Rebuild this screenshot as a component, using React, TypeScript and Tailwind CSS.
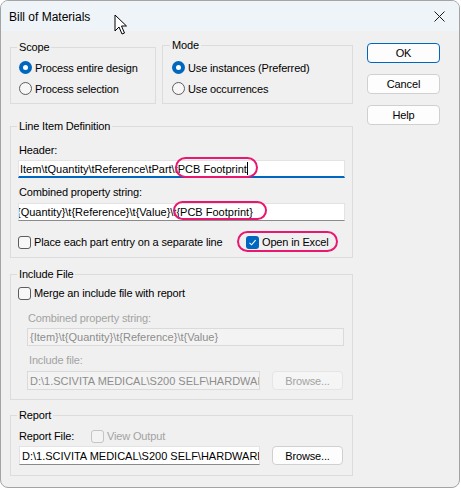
import React from "react";

const Radio = ({ checked, label }: { checked?: boolean; label: string }) => (
  <div className="flex h-[21px] items-center">
    {checked ? (
      <span className="flex h-[13px] w-[13px] items-center justify-center rounded-full bg-[#0067c0]">
        <span className="h-[5px] w-[5px] rounded-full bg-white" />
      </span>
    ) : (
      <span className="h-[13px] w-[13px] rounded-full border border-[#5d5d5d] bg-[#f7f7f7]" />
    )}
    <span className="ml-[3px] leading-[14px]">{label}</span>
  </div>
);

const Check = ({
  checked,
  disabled,
  label,
}: {
  checked?: boolean;
  disabled?: boolean;
  label: string;
}) => (
  <div className="flex h-[20px] items-center">
    {checked ? (
      <span className="flex h-[13px] w-[13px] items-center justify-center rounded-[3px] bg-[#0067c0]">
        <svg width="9" height="9" viewBox="0 0 9 9">
          <path d="M1.5 4.8 L3.6 6.8 L7.6 2.2" fill="none" stroke="white" strokeWidth="1.1" />
        </svg>
      </span>
    ) : (
      <span
        className={
          disabled
            ? "h-[13px] w-[13px] rounded-[3px] border border-[#c4c4c4] bg-[#f3f3f3]"
            : "h-[13px] w-[13px] rounded-[3px] border border-[#5d5d5d] bg-[#f7f7f7]"
        }
      />
    )}
    <span className={disabled ? "ml-[3px] leading-[14px] text-[#a3a3a3]" : "ml-[3px] leading-[14px]"}>
      {label}
    </span>
  </div>
);

const Group = ({
  label,
  labelLeft,
  className,
  children,
}: {
  label: string;
  labelLeft: string;
  className: string;
  children?: React.ReactNode;
}) => (
  <div className={"relative border border-[#dcdcdc] " + className}>
    <span className={"absolute top-[-8px] bg-[#f0f0f0] px-[2px] leading-[14px] " + labelLeft}>{label}</span>
    {children}
  </div>
);

const Ellipse = ({ className }: { className: string }) => (
  <span className={"pointer-events-none absolute rounded-full border-[2.5px] border-[#e9176f] " + className} />
);

const Button = ({
  label,
  primary,
  disabled,
  className,
}: {
  label: string;
  primary?: boolean;
  disabled?: boolean;
  className?: string;
}) => (
  <div
    className={
      "flex items-center justify-center rounded-[4px] border leading-[14px] " +
      (primary
        ? "border-[#0067c0] bg-[#fdfdfd]"
        : disabled
        ? "border-[#e5e5e5] bg-[#f5f5f5] text-[#a3a3a3]"
        : "border-[#d0d0d0] bg-[#fdfdfd]") +
      " " +
      (className ?? "")
    }
  >
    {label}
  </div>
);

export default function App() {
  return (
    <div className="h-[490px] w-[461px] bg-white font-['Liberation_Sans',Arial,sans-serif] text-[11px] text-black">
      <div className="relative h-[488px] w-[460px] overflow-hidden rounded-[8px] border border-[#a4a4a4] bg-[#f0f0f0]">
        {/* title bar */}
        <div className="flex h-[30px] items-center justify-between bg-[#eff4f9] pl-[8px] pr-[14px]">
          <span className="pt-[1px] text-[12px] leading-[16px]">Bill of Materials</span>
          <svg width="11" height="11" viewBox="0 0 11 11">
            <path d="M0.5 0.5 L10.5 10.5 M10.5 0.5 L0.5 10.5" stroke="#1a1a1a" strokeWidth="1" />
          </svg>
        </div>

        {/* body */}
        <div className="flex pl-[9px] tracking-[-0.15px]">
          {/* left column */}
          <div className="mt-[14px] flex w-[343px] flex-col">
            <div className="flex items-end gap-[6px]">
              <Group label="Scope" labelLeft="left-[6px]" className="h-[57px] w-[146px] pl-[8px] pt-[9px]">
                <Radio checked label="Process entire design" />
                <Radio label="Process selection" />
              </Group>
              <Group label="Mode" labelLeft="left-[7px]" className="h-[59px] w-[191px] pl-[9px] pt-[11px]">
                <Radio checked label="Use instances (Preferred)" />
                <Radio label="Use occurrences" />
              </Group>
            </div>

            <Group
              label="Line Item Definition"
              labelLeft="left-[6px]"
              className="mt-[22px] h-[132px] pl-[8px] pt-[16px]"
            >
              <div className="h-[14px] leading-[14px]">Header:</div>
              <div className="relative ml-[-1px] mt-[3px] h-[18px] w-[327px] tracking-normal">
                <div className="flex h-[18px] items-center overflow-hidden whitespace-pre border border-[#e3e3e3] border-b-2 border-b-[#0067c0] bg-white pl-[1px]">
                  <span className="leading-[14px]">{"Item\\tQuantity\\tReference\\tPart\\tPCB Footprint"}</span>
                  <span className="inline-block h-[13px] w-[1px] bg-black" />
                </div>
                <Ellipse className="left-[157px] top-[-3px] h-[21px] w-[83px]" />
              </div>
              <div className="mt-[7px] h-[14px] leading-[14px]">Combined property string:</div>
              <div className="relative ml-[-1px] mt-[4px] h-[18px] w-[327px] tracking-normal">
                <div className="flex h-[18px] items-center overflow-hidden whitespace-pre border border-[#e3e3e3] border-b-[#8a8a8a] bg-white pl-[1px]">
                  <span className="ml-[-3px] leading-[14px]">
                    {"{Quantity}\\t{Reference}\\t{Value}\\t{PCB Footprint}"}
                  </span>
                </div>
                <Ellipse className="left-[155px] top-[-2px] h-[19px] w-[94px]" />
              </div>
              <div className="relative ml-[-1px] mt-[11px] flex h-[20px]">
                <div className="w-[228px]">
                  <Check label="Place each part entry on a separate line" />
                </div>
                <Check checked label="Open in Excel" />
                <Ellipse className="left-[219px] top-[-1px] h-[21px] w-[101px]" />
              </div>
            </Group>

            <Group label="Include File" labelLeft="left-[6px]" className="mt-[16px] h-[126px] pl-[8px] pt-[8px]">
              <div className="ml-[-1px]">
                <Check label="Merge an include file with report" />
              </div>
              <div className="ml-[9px] mt-[8px] h-[14px] leading-[14px] text-[#a3a3a3]">Combined property string:</div>
              <div className="ml-[8px] mt-[3px] flex h-[18px] w-[317px] items-center overflow-hidden whitespace-pre border border-[#dadada] bg-[#f3f3f3] pl-[2px] tracking-normal text-[#8d8d8d]">
                <span className="leading-[14px]">{"{Item}\\t{Quantity}\\t{Reference}\\t{Value}"}</span>
              </div>
              <div className="ml-[10px] mt-[7px] h-[14px] leading-[14px] text-[#a3a3a3]">Include file:</div>
              <div className="ml-[8px] mt-[4px] flex h-[19px] items-center">
                <div className="flex h-[19px] w-[233px] items-center overflow-hidden whitespace-pre border border-[#dadada] bg-[#f3f3f3] pl-[2px] tracking-normal text-[#8d8d8d]">
                  <span className="leading-[14px]">{"D:\\1.SCIVITA MEDICAL\\S200 SELF\\HARDWARE"}</span>
                </div>
                <Button label="Browse..." disabled className="ml-[12px] h-[19px] w-[71px]" />
              </div>
            </Group>

            <Group label="Report" labelLeft="left-[6px]" className="mt-[15px] h-[61px] pl-[8px] pt-[13px]">
              <div className="flex h-[14px] items-center">
                <span className="w-[72px] leading-[14px]">Report File:</span>
                <Check disabled label="View Output" />
              </div>
              <div className="mt-[3px] flex h-[19px] items-center">
                <div className="flex h-[19px] w-[241px] items-center overflow-hidden whitespace-pre border border-[#e3e3e3] border-b-[#8a8a8a] bg-white pl-[2px] tracking-normal">
                  <span className="leading-[14px]">{"D:\\1.SCIVITA MEDICAL\\S200 SELF\\HARDWARE"}</span>
                </div>
                <Button label="Browse..." className="ml-[12px] h-[19px] w-[71px]" />
              </div>
            </Group>
          </div>

          {/* buttons */}
          <div className="ml-[14px] mt-[12px] flex w-[73px] flex-col gap-[11px]">
            <Button label="OK" primary className="h-[20px]" />
            <Button label="Cancel" className="h-[20px]" />
            <Button label="Help" className="h-[20px]" />
          </div>
        </div>

        {/* mouse pointer */}
        <svg className="absolute left-[113px] top-[13px]" width="14" height="22" viewBox="0 0 14 22">
          <path
            d="M1 1 L1 17 L5 13 L8 20 L10.5 19 L7.5 12 L12.5 12 Z"
            fill="white"
            stroke="black"
            strokeWidth="1"
            strokeLinejoin="miter"
          />
        </svg>
      </div>
    </div>
  );
}
